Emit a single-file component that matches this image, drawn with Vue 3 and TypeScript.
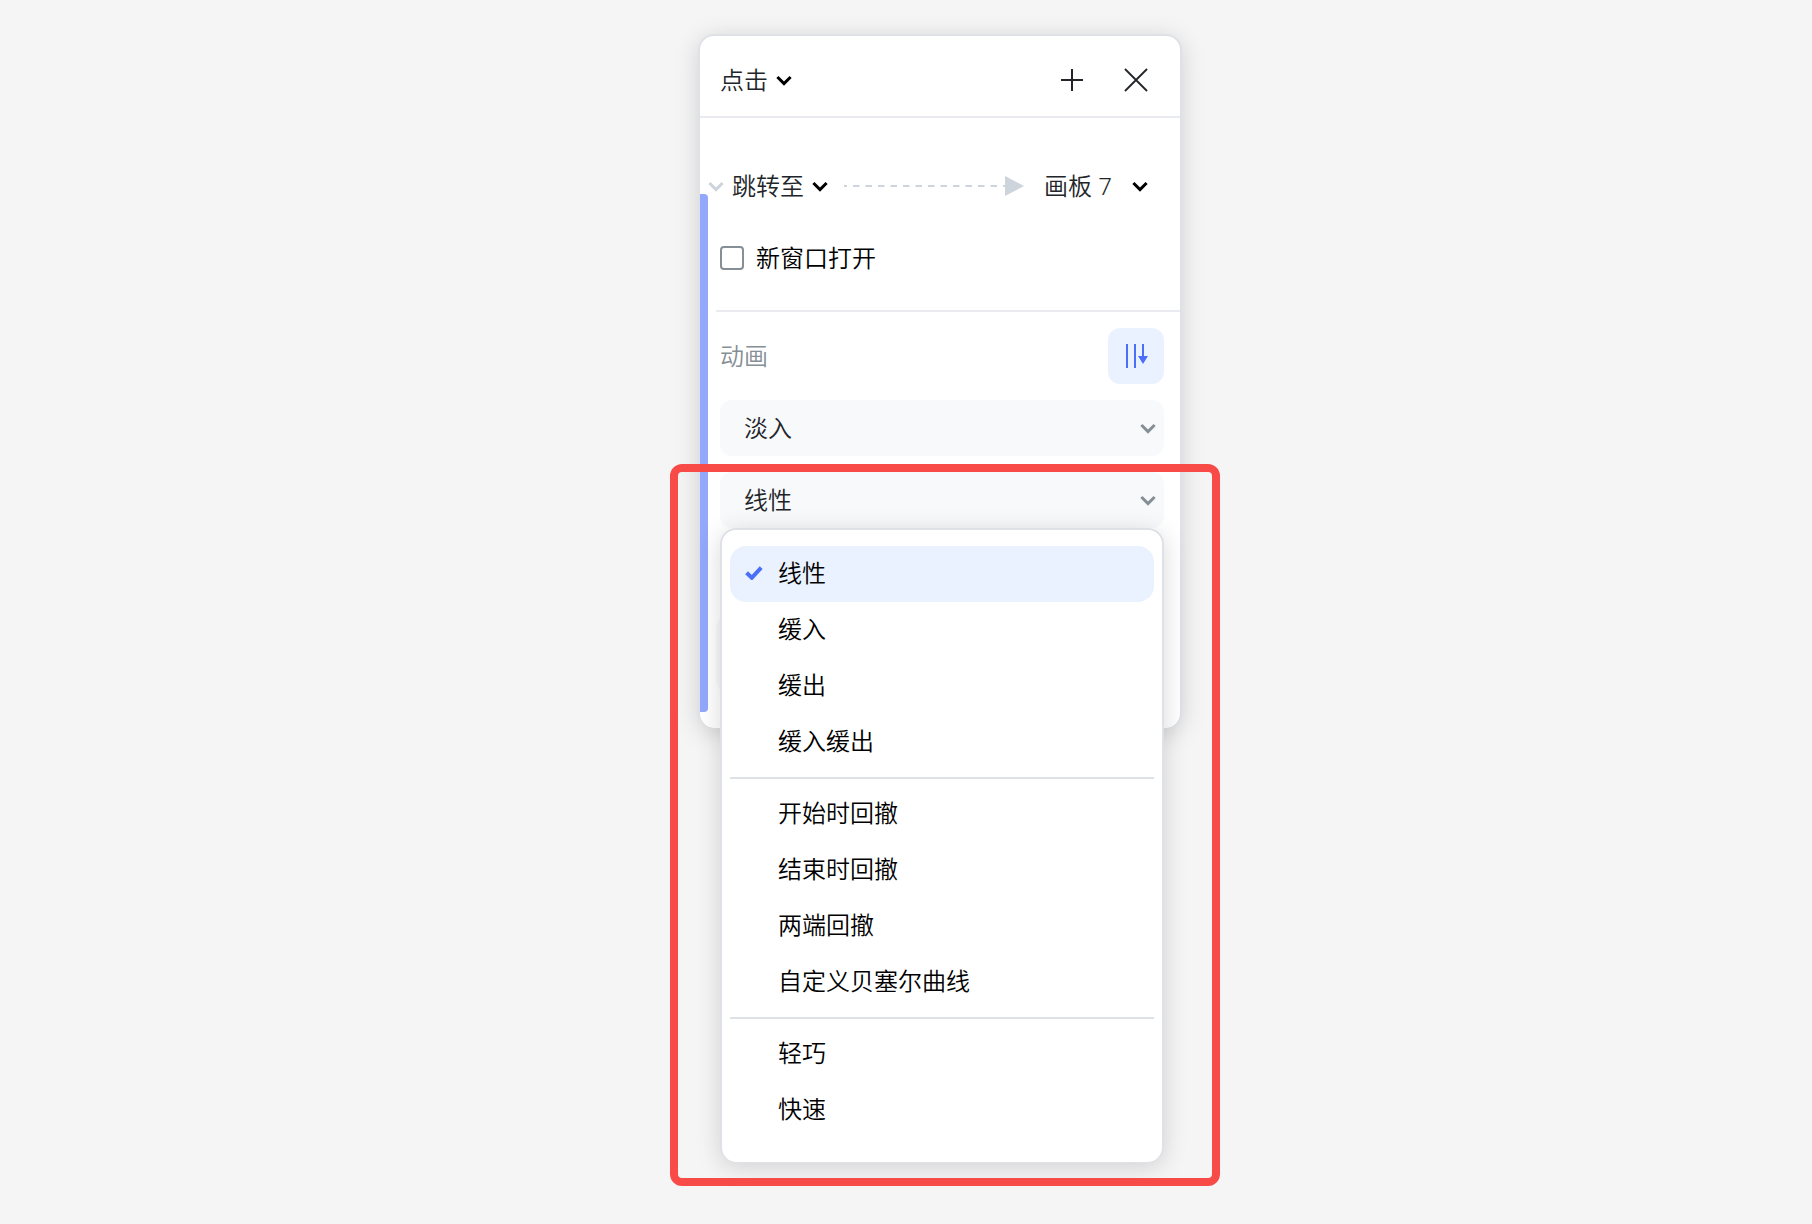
<script setup lang="ts">
import { ref } from 'vue'

const groups: string[][] = [
  ['线性', '缓入', '缓出', '缓入缓出'],
  ['开始时回撤', '结束时回撤', '两端回撤', '自定义贝塞尔曲线'],
  ['轻巧', '快速'],
]

const trigger = ref('点击')
const action = ref('跳转至')
const target = ref('画板 7')
const effect = ref('淡入')
const easing = ref('线性')
const newWindow = ref(false)
</script>

<template>
  <main class="stage">
    <section class="panel" aria-label="交互">
      <header class="head">
        <div class="pick">
          <select v-model="trigger" class="w-two" aria-label="触发方式">
            <option>点击</option>
          </select>
          <svg class="chev" viewBox="0 0 16 12" width="16" height="12"><path d="M1.4 3 8 9.6 14.6 3" /></svg>
        </div>
        <div class="tools">
          <button class="icon" type="button" aria-label="添加">
            <svg viewBox="0 0 24 24" width="24" height="24"><path d="M12 1v22M1 12h22" stroke-width="2" /></svg>
          </button>
          <button class="icon" type="button" aria-label="关闭">
            <svg viewBox="0 0 24 24" width="24" height="24"><path d="m1 1 22 22M23 1 1 23" stroke-width="1.8" /></svg>
          </button>
        </div>
      </header>

      <div class="body">
        <div class="bar"></div>

        <div class="jump">
          <button class="fold" type="button" aria-label="折叠">
            <svg class="chev pale" viewBox="0 0 16 12" width="16" height="12"><path d="M1.4 3 8 9.6 14.6 3" /></svg>
          </button>
          <div class="pick">
            <select v-model="action" class="w-three" aria-label="动作">
              <option>跳转至</option>
            </select>
            <svg class="chev" viewBox="0 0 16 12" width="16" height="12"><path d="M1.4 3 8 9.6 14.6 3" /></svg>
          </div>
          <svg class="arrow" viewBox="0 0 180 20" width="180" height="20">
            <path d="M0 10h3M9 10h152" fill="none" stroke="#ced4dc" stroke-width="2" stroke-dasharray="6.5 6" />
            <path d="M161 0v20l19-10z" fill="#ced4dc" />
          </svg>
          <div class="pick target">
            <select v-model="target" class="w-three" aria-label="目标画板">
              <option>画板 7</option>
            </select>
            <svg class="chev" viewBox="0 0 16 12" width="16" height="12"><path d="M1.4 3 8 9.6 14.6 3" /></svg>
          </div>
        </div>

        <label class="check">
          <input v-model="newWindow" type="checkbox" />
          <span>新窗口打开</span>
        </label>

        <div class="anim">
          <div class="anim-head">
            <h2>动画</h2>
            <button class="sort" type="button" aria-label="动画顺序">
              <svg viewBox="0 0 24 24" width="24" height="24">
                <path d="M2 0h2v24H2zM10 0h2v24h-2zM18 0h2v12h4l-5 8-5-8h4z" fill="#4b6ff9" />
              </svg>
            </button>
          </div>

          <div class="field">
            <select v-model="effect" aria-label="动画效果">
              <option>淡入</option>
            </select>
            <svg class="chev grey" viewBox="0 0 16 12" width="16" height="12"><path d="M1.4 3 8 9.6 14.6 3" /></svg>
          </div>

          <div class="field">
            <select v-model="easing" aria-label="缓动曲线">
              <option v-for="name in groups.flat()" :key="name">{{ name }}</option>
            </select>
            <svg class="chev grey" viewBox="0 0 16 12" width="16" height="12"><path d="M1.4 3 8 9.6 14.6 3" /></svg>

            <div class="layer">
              <div class="menu" role="listbox" aria-label="缓动曲线">
                <div v-for="(group, i) in groups" :key="i" class="group" role="group">
                  <button
                    v-for="name in group"
                    :key="name"
                    type="button"
                    role="option"
                    class="item"
                    :class="{ on: name === easing }"
                    :aria-selected="name === easing"
                    @click="easing = name"
                  >
                    <svg v-if="name === easing" class="tick" viewBox="0 0 18 14" width="18" height="14">
                      <path d="m1.6 6.8 5.2 5L16.2 1.6" />
                    </svg>
                    <span>{{ name }}</span>
                  </button>
                </div>
              </div>
              <div class="highlight"></div>
            </div>
          </div>

          <div class="preview"></div>
        </div>
      </div>
    </section>
  </main>
</template>

<style>
body {
  margin: 0;
  background: #f5f5f5;
}
</style>

<style scoped>
* {
  box-sizing: border-box;
}

.stage {
  display: flex;
  justify-content: center;
  align-items: flex-start;
  min-height: 100vh;
  padding: 34px 0 38px 68px;
  font-family: 'Noto Sans', 'Noto Sans CJK SC', sans-serif;
  font-size: 24px;
  font-weight: 350;
  line-height: 36px;
  color: #212529;
}

button,
select,
input {
  margin: 0;
  padding: 0;
  border: 0;
  background: none;
  font: inherit;
  color: inherit;
  appearance: none;
}

svg {
  display: block;
}

.panel {
  width: 484px;
  border: 2px solid #dee2e6;
  border-bottom-width: 1px;
  border-radius: 16px;
  background: #fff;
  box-shadow: 0 4px 24px rgba(0, 0, 0, 0.15);
}

.head {
  display: flex;
  align-items: center;
  justify-content: space-between;
  height: 82px;
  padding: 8px 32px 0 20px;
  border-bottom: 2px solid #e9ebf0;
}

.tools {
  display: flex;
  gap: 40px;
}

.icon path {
  fill: none;
  stroke: #212529;
}

.pick {
  display: flex;
  align-items: center;
  gap: 8px;
}

.w-two {
  width: 48px;
}

.w-three {
  width: 72px;
}

.chev {
  flex: none;
  fill: none;
  stroke: #000;
  stroke-width: 3;
  pointer-events: none;
}

.chev.pale {
  stroke: #ced4dc;
}

.chev.grey {
  stroke: #868e96;
}

.body {
  position: relative;
  padding: 40px 0 36px;
}

.bar {
  position: absolute;
  top: 76px;
  bottom: 16px;
  left: 0;
  width: 8px;
  border-radius: 0 4px 4px 0;
  background: #93a8fb;
}

.jump {
  display: flex;
  align-items: center;
  height: 56px;
  padding: 0 32px 0 8px;
}

.fold {
  margin-right: 8px;
}

.arrow {
  margin-left: 16px;
}

.target {
  gap: 16px;
  margin-left: auto;
}

.check {
  display: flex;
  align-items: center;
  gap: 12px;
  height: 56px;
  margin: 16px 16px 24px 20px;
  color: #000;
}

.check input {
  width: 24px;
  height: 24px;
  border: 2px solid #868e96;
  border-radius: 4px;
}

.check input:checked {
  background: #4b6ff9;
}

.anim {
  display: flex;
  flex-direction: column;
  gap: 16px;
  margin-left: 16px;
  padding: 16px 16px 0 4px;
  border-top: 2px solid #e9ebf0;
}

.anim-head {
  display: flex;
  align-items: center;
  justify-content: space-between;
}

h2 {
  margin: 0;
  font-size: 24px;
  font-weight: 350;
  color: #868e96;
}

.sort {
  display: flex;
  align-items: center;
  justify-content: center;
  width: 56px;
  height: 56px;
  border-radius: 12px;
  background: #ebf2ff;
}

.field {
  position: relative;
  display: flex;
  align-items: center;
  height: 56px;
  padding-right: 8px;
  border-radius: 12px;
  background: #f8f9fb;
}

.field select {
  flex: 1;
  height: 56px;
  padding-left: 24px;
}

.layer {
  position: absolute;
  z-index: 1;
  top: 100%;
  left: 0;
  right: 0;
}

.menu {
  padding: 16px 8px 24px;
  border: 2px solid #dee2e6;
  border-bottom-width: 1px;
  border-radius: 16px;
  background: #fff;
  box-shadow: 0 4px 24px rgba(0, 0, 0, 0.15);
  color: #000;
}

.group + .group {
  margin-top: 7px;
  padding-top: 7px;
  border-top: 2px solid #dee2e6;
}

.item {
  display: flex;
  align-items: center;
  width: 100%;
  height: 56px;
  padding: 0 0 2px 48px;
  border-radius: 16px;
}

.item.on {
  gap: 15px;
  padding-left: 15px;
  background: #ebf2ff;
}

.tick {
  fill: none;
  stroke: #4b6ff9;
  stroke-width: 4;
}

.highlight {
  position: absolute;
  top: -64px;
  right: -56px;
  bottom: -23px;
  left: -50px;
  border: 8px solid #f84b48;
  border-radius: 12px;
  pointer-events: none;
}

.preview {
  height: 76px;
  margin: 72px 0 0 -4px;
  border-radius: 12px;
  background: #f8f9fb;
}
</style>
